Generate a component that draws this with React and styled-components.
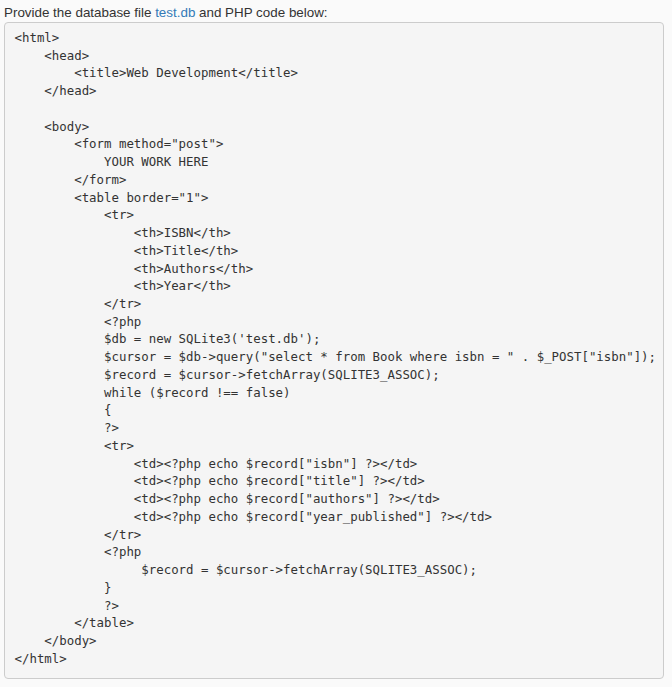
import React from "react";
import styled, { createGlobalStyle } from "styled-components";

const Global = createGlobalStyle`
  html, body {
    margin: 0;
    padding: 0;
    background: #fafafa;
  }
`;

const Page = styled.div`
  padding: 3px 8px 6px 4px;
  font-family: "Liberation Sans", Arial, sans-serif;
  font-size: 13.4px;
  line-height: 19px;
  color: #333333;
`;

const Intro = styled.p`
  margin: 0;
`;

const Link = styled.a`
  color: #337ab7;
  text-decoration: none;
`;

const Pre = styled.pre`
  margin: 0;
  width: 660px;
  box-sizing: border-box;
  padding: 6px 9px 11px 9.5px;
  background: #f5f5f5;
  border: 1px solid #cccccc;
  border-radius: 4px;
  color: #333333;
  font-family: "DejaVu Sans Mono", monospace;
  font-size: 12.4px;
  line-height: 17.74px;
  white-space: pre;
  overflow: hidden;
`;

const code = `<html>
    <head>
        <title>Web Development</title>
    </head>

    <body>
        <form method="post">
            YOUR WORK HERE
        </form>
        <table border="1">
            <tr>
                <th>ISBN</th>
                <th>Title</th>
                <th>Authors</th>
                <th>Year</th>
            </tr>
            <?php
            $db = new SQLite3('test.db');
            $cursor = $db->query("select * from Book where isbn = " . $_POST["isbn"]);
            $record = $cursor->fetchArray(SQLITE3_ASSOC);
            while ($record !== false)
            {
            ?>
            <tr>
                <td><?php echo $record["isbn"] ?></td>
                <td><?php echo $record["title"] ?></td>
                <td><?php echo $record["authors"] ?></td>
                <td><?php echo $record["year_published"] ?></td>
            </tr>
            <?php
                 $record = $cursor->fetchArray(SQLITE3_ASSOC);
            }
            ?>
        </table>
    </body>
</html>`;

export default function App() {
  return (
    <>
      <Global />
      <Page>
        <Intro>
          Provide the database file <Link href="#">test.db</Link> and PHP code below:
        </Intro>
        <Pre>{code}</Pre>
      </Page>
    </>
  );
}
